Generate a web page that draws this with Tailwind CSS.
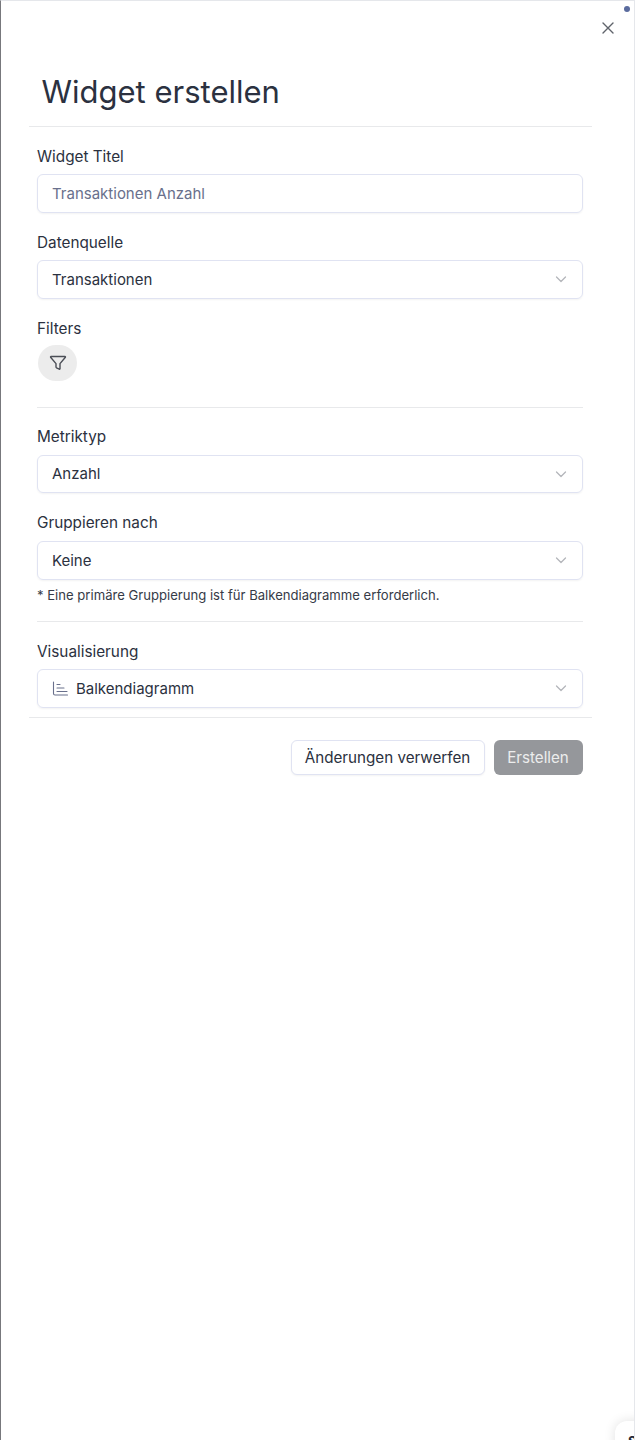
<!DOCTYPE html>
<html lang="de">
<head>
    <meta charset="UTF-8">
    <meta name="viewport" content="width=device-width, initial-scale=1.0">
    <script src="https://cdn.jsdelivr.net/npm/@tailwindcss/browser@4"></script>
    <title>Widget erstellen</title>
</head>
<body class="bg-white font-['Inter',sans-serif] text-[#2b3140]">
    <div class="relative h-[1440px] w-[635px] overflow-hidden border-t border-r border-l-[1.5px] border-t-[#e5e7eb] border-r-[#e5e7eb] border-l-[#77787c] bg-white">
        <!-- Notification dot -->
        <div class="absolute top-[5px] right-[4px] h-[6px] w-[6px] rounded-full bg-[#5a6b9e]"></div>

        <!-- Close -->
        <button class="absolute top-[20px] right-[19px] text-[#5f636b]">
            <svg class="h-[14px] w-[14px]" viewBox="0 0 14 14" fill="none" stroke="currentColor" stroke-width="1.4" stroke-linecap="round"><path d="M2 2l10 10M12 2L2 12"/></svg>
        </button>

        <!-- Header -->
        <div class="ml-[27.5px] w-[563px] border-b border-[#e8e9eb] pt-[71px] pb-[15px] pl-[13px]">
            <h1 class="text-[31px] leading-[39px] font-[420]">Widget erstellen</h1>
        </div>

        <!-- Form -->
        <div class="ml-[36px] w-[545.5px]">
            <label class="mt-[20px] block text-[15.3px] leading-[20px] font-[430]">Widget Titel</label>
            <div class="mt-[7px] flex h-[39px] items-center rounded-md border border-[#e0e3f2] px-[14px] pt-[1px] text-[15px] text-[#69708c] shadow-xs">Transaktionen Anzahl</div>

            <label class="mt-[20px] block text-[15.3px] leading-[20px] font-[430]">Datenquelle</label>
            <div class="mt-[7px] flex h-[39px] items-center justify-between rounded-md border border-[#e0e3f2] pt-[1px] pr-[15px] pl-[14px] text-[15px] shadow-xs">
                <span>Transaktionen</span>
                <svg class="mb-[2px] h-[12px] w-[12px] text-[#b4b6bb]" viewBox="0 0 12 12" fill="none" stroke="currentColor" stroke-width="1.3" stroke-linecap="round" stroke-linejoin="round"><path d="M1.5 4l4.5 4.500L10.500 4"/></svg>
            </div>

            <label class="mt-[20px] block text-[15.3px] leading-[20px] font-[430]">Filters</label>
            <button class="mt-[6px] ml-[1px] flex h-[36px] w-[39px] items-center justify-center rounded-full bg-[#ececec] text-[#4a4d55]">
                <svg class="ml-[1px] h-[18px] w-[18px]" viewBox="0 0 18 18" fill="none" stroke="currentColor" stroke-width="1.4" stroke-linejoin="round"><path d="M2 2.500h14c.4 0 .6.4.4.7L11 9.600v5.200c0 .4-.4.6-.7.4l-2.800-1.400c-.3-.1-.5-.4-.5-.7V9.600L1.600 3.200c-.2-.3 0-.7.4-.7z"/></svg>
            </button>

            <div class="mt-[26px] border-t border-[#e8e9eb]"></div>

            <label class="mt-[19px] block text-[15.3px] leading-[20px] font-[430]">Metriktyp</label>
            <div class="mt-[8px] flex h-[38px] items-center justify-between rounded-md border border-[#e0e3f2] pt-[1px] pr-[15px] pl-[14px] text-[15px] shadow-xs">
                <span>Anzahl</span>
                <svg class="mb-[2px] h-[12px] w-[12px] text-[#b4b6bb]" viewBox="0 0 12 12" fill="none" stroke="currentColor" stroke-width="1.3" stroke-linecap="round" stroke-linejoin="round"><path d="M1.5 4l4.5 4.500L10.500 4"/></svg>
            </div>

            <label class="mt-[20px] block text-[15.3px] leading-[20px] font-[430]">Gruppieren nach</label>
            <div class="mt-[8px] flex h-[39px] items-center justify-between rounded-md border border-[#e0e3f2] pt-[1px] pr-[15px] pl-[14px] text-[15px] shadow-xs">
                <span>Keine</span>
                <svg class="mb-[2px] h-[12px] w-[12px] text-[#b4b6bb]" viewBox="0 0 12 12" fill="none" stroke="currentColor" stroke-width="1.3" stroke-linecap="round" stroke-linejoin="round"><path d="M1.5 4l4.5 4.500L10.500 4"/></svg>
            </div>
            <p class="mt-[6px] text-[13.1px] leading-[18px] text-[#363b47]">* Eine primäre Gruppierung ist für Balkendiagramme erforderlich.</p>

            <div class="mt-[17px] border-t border-[#e8e9eb]"></div>

            <label class="mt-[20px] block text-[15.3px] leading-[20px] font-[430]">Visualisierung</label>
            <div class="mt-[7px] flex h-[39px] items-center justify-between rounded-md border border-[#e0e3f2] pt-[1px] pr-[15px] pl-[14px] text-[15px] shadow-xs">
                <span class="flex items-center gap-[8px]">
                    <svg class="h-[16px] w-[16px] text-[#69708c]" viewBox="0 0 16 16" fill="none" stroke="currentColor" stroke-width="1.1" stroke-linecap="round"><path d="M1.500 1V12.500c0 1 .5 1.500 1.500 1.500H15.500M5 3.500h3M5 7h7M5 10.500h10"/></svg>
                    <span>Balkendiagramm</span>
                </span>
                <svg class="mb-[2px] h-[12px] w-[12px] text-[#b4b6bb]" viewBox="0 0 12 12" fill="none" stroke="currentColor" stroke-width="1.3" stroke-linecap="round" stroke-linejoin="round"><path d="M1.5 4l4.5 4.500L10.500 4"/></svg>
            </div>
        </div>

        <!-- Footer -->
        <div class="mt-[9px] ml-[27.5px] flex w-[563px] justify-end gap-[9px] border-t border-[#e8e9eb] pt-[22px] pr-[9px]">
            <button class="h-[35px] w-[194px] rounded-md border border-[#e0e3f2] bg-white pt-[1px] text-[15.2px] font-[430] shadow-xs">Änderungen verwerfen</button>
            <button class="h-[35px] w-[89px] rounded-md bg-[#95979b] pt-[1px] text-[15.2px] font-[430] text-[#eceded]">Erstellen</button>
        </div>

        <!-- Corner widget, cut off by the window -->
        <div class="absolute top-[1420px] left-[614px] h-[40px] w-[40px] rounded-tl-[12px] bg-white pt-[13px] pl-[13px] text-[13px] leading-[14px] font-bold text-[#252b37] shadow-[0_0_12px_rgba(0,0,0,0.12)]">S</div>
    </div>
</body>
</html>
